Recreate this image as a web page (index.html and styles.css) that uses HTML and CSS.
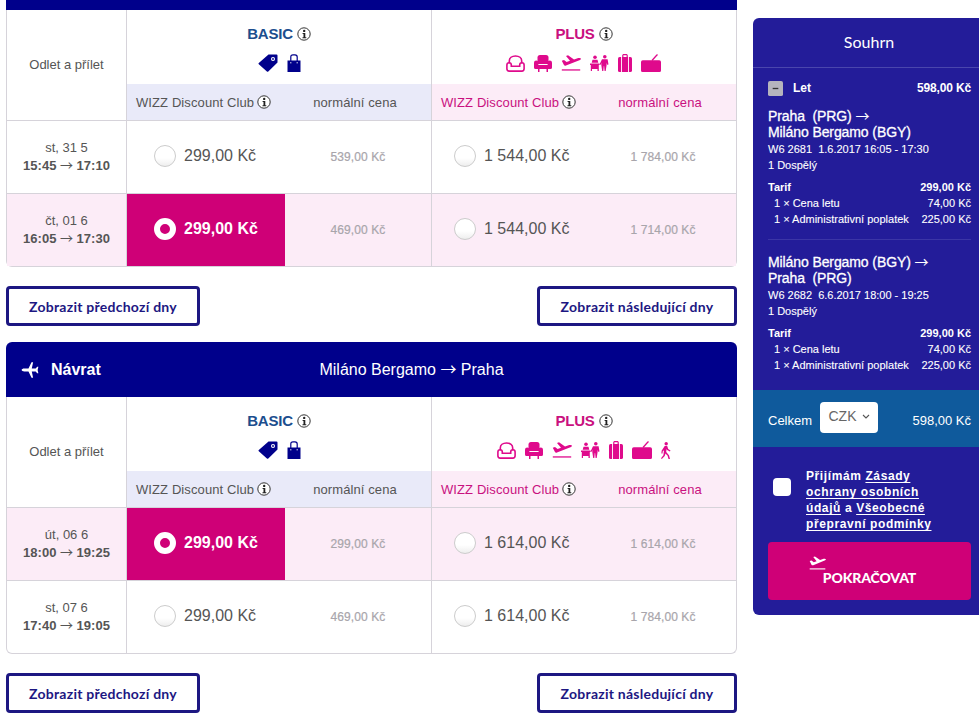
FILE: index.html
```html
<!DOCTYPE html>
<html lang="cs">
<head>
<meta charset="utf-8">
<title>Výběr letu</title>
<link rel="stylesheet" href="styles.css">
</head>
<body>
<svg class="defs" width="0" height="0" aria-hidden="true">
  <symbol id="i-info" viewBox="0 0 14 14"><circle cx="7" cy="7" r="6.2" fill="#fff" stroke="#333" stroke-width="1"/><circle cx="7.2" cy="3.9" r="1.2" fill="#222"/><path d="M5.6 6h2.7v4.2h1v1H5.500v-1h1V7H5.600z" fill="#222"/></symbol>
  <symbol id="i-tag" viewBox="0 0 20 18"><path d="M10.500.5h8a1 1 0 0 1 1 1v7L10.300 17.500a1 1 0 0 1-1.400 0L.8 10.300a1 1 0 0 1 0-1.400z" fill="currentColor"/><circle cx="15" cy="5" r="2" fill="#fff"/><circle cx="15" cy="5" r=".9" fill="currentColor"/></symbol>
  <symbol id="i-bag" viewBox="0 0 14 18"><path d="M.5 6.500h13V18H.5z" fill="currentColor"/><path d="M3.800 9V3A2.200 2.200 0 0 1 6 .8h2A2.200 2.200 0 0 1 10.200 3v6" fill="none" stroke="currentColor" stroke-width="1.200"/><path d="M3.200 8.800h1.200M9.600 8.800h1.200" stroke="#fff" stroke-width="1"/></symbol>
  <symbol id="i-seat-o" viewBox="0 0 19 17"><path d="M3.300 8.500V6C3.300 3 5.800 1 9.500 1s6.200 2 6.200 5v2.500" fill="none" stroke="currentColor" stroke-width="1.600"/><path d="M.9 10a2.200 2.200 0 0 1 4.400 0v1.200h8.400V10a2.200 2.200 0 0 1 4.400 0v3.800a2.300 2.300 0 0 1-2.300 2.300H3.200A2.300 2.300 0 0 1 .9 13.800z" fill="none" stroke="currentColor" stroke-width="1.600"/></symbol>
  <symbol id="i-seat" viewBox="0 0 18 17"><path d="M3.500 2.500A2.500 2.500 0 0 1 6 0h6a2.500 2.500 0 0 1 2.500 2.500V9h-11z" fill="currentColor"/><path d="M0 7.800a2.200 2.200 0 0 1 4.400 0V10h9.200V7.800a2.200 2.200 0 0 1 4.400 0v4.700a1.500 1.500 0 0 1-1.500 1.500h-15A1.500 1.500 0 0 1 0 12.500z" fill="currentColor"/><path d="M4 13.500h1.500V17H4zM12.500 13.500H14V17h-1.500z" fill="currentColor"/></symbol>
  <symbol id="i-plane" viewBox="0 0 20 16"><path d="M.8 5.700 3 5l2.600 2L9 5.800 5 .9l2-.6 6 4.300 4.300-1.500c1.200-.4 2.300-.2 2.600.4.200.6-.4 1.200-1.500 1.700L5 10.600c-.8.300-1.400.2-1.900-.3z" fill="currentColor"/><path d="M.8 14.300h18.400v1.300H.8z" fill="currentColor"/></symbol>
  <symbol id="i-people" viewBox="0 0 19 16"><circle cx="5" cy="2.200" r="1.800" fill="currentColor"/><circle cx="14.800" cy="1.800" r="1.800" fill="currentColor"/><path d="M2.500 4.800h5l.8 3H1.700zM0 8.600h9.600V10H8.800v6H7.500v-2H2v2H.8v-6H0z" fill="currentColor"/><path d="M12 4.200h5.600l.9 5.300-1.400.2-.5-2.300V10l-.9 6h-1.100l-.5-5h-.3l-.5 5h-1.100l-.9-6V7.400l-.5 2.300-1.300-.2z" fill="currentColor"/></symbol>
  <symbol id="i-case" viewBox="0 0 14 18"><path d="M4.200 3.200V1.600C4.200.7 4.900 0 5.800 0h2.400c.9 0 1.600.7 1.600 1.600v1.600H8.600V1.200H5.400v2z" fill="currentColor"/><rect y="3" width="14" height="15" rx="1.600" fill="currentColor"/><path d="M3.500 3v15M10.500 3v15" stroke="#fff" stroke-width=".9"/></symbol>
  <symbol id="i-hand" viewBox="0 0 20 18"><path d="M11 6.500 15 2l1.500-1.500" fill="none" stroke="currentColor" stroke-width="1.300"/><path d="M0 8a1.800 1.800 0 0 1 1.800-1.800h16.400A1.800 1.800 0 0 1 20 8v8.500a1.500 1.500 0 0 1-1.500 1.500h-17A1.500 1.500 0 0 1 0 16.500z" fill="currentColor"/></symbol>
  <symbol id="i-walk" viewBox="0 0 10 17"><circle cx="5.200" cy="1.700" r="1.700" fill="currentColor"/><path d="M3.700 4h2.500l1 3 2.300 1.500-.6.900L6.100 8l-.5-1-.4 3 2.800 3.200 1 3.800H7.500l-.9-3.200L4.500 11.500 3.700 14 .8 17l-.8-.8L2.400 13.300l.6-5-1.300 1.100-.2 2H.4l.2-2.700z" fill="currentColor"/></symbol>
  <symbol id="i-back" viewBox="0 0 20 18"><g transform="translate(20 0) scale(-1 1)"><path d="M19.400 9c0-.9-1.400-1.600-3-1.600h-4.700L8.300.4H6.500l1.500 7H3.600L1.900 5.300H.6L1.400 9 .6 12.700h1.300l1.700-2.100H8l-1.500 7h1.800l3.400-7h4.700c1.600 0 3-.7 3-1.600z" fill="currentColor"/></g></symbol>
  <symbol id="i-minus" viewBox="0 0 16 16"><rect width="16" height="16" rx="2" fill="#b5b4bd"/><path d="M5 8h6" stroke="#333" stroke-width="1.400"/></symbol>
</svg>

<div class="page">
  <main class="main">
    <section class="flight flight-out">
      <div class="bar bar-cut"></div>
      <div class="fare-table">
        <div class="head">
          <div class="head-label">Odlet a přílet</div>
          <div class="plan">
            <div class="plan-top plan-basic">
              <div class="plan-name">BASIC <svg class="info"><use href="#i-info"/></svg></div>
              <div class="plan-icons">
                <svg class="ic-tag"><use href="#i-tag"/></svg>
                <svg class="ic-bag"><use href="#i-bag"/></svg>
              </div>
            </div>
            <div class="plan-sub sub-basic">
              <div class="sub-club">WIZZ Discount Club <svg class="info"><use href="#i-info"/></svg></div>
              <div class="sub-norm">normální cena</div>
            </div>
          </div>
          <div class="plan plan-last">
            <div class="plan-top plan-plus">
              <div class="plan-name">PLUS <svg class="info"><use href="#i-info"/></svg></div>
              <div class="plan-icons icons-plus">
                <svg class="ic-seat"><use href="#i-seat-o"/></svg>
                <svg class="ic-seat2"><use href="#i-seat"/></svg>
                <svg class="ic-plane"><use href="#i-plane"/></svg>
                <svg class="ic-people"><use href="#i-people"/></svg>
                <svg class="ic-case"><use href="#i-case"/></svg>
                <svg class="ic-hand"><use href="#i-hand"/></svg>
              </div>
            </div>
            <div class="plan-sub sub-plus">
              <div class="sub-club">WIZZ Discount Club <svg class="info"><use href="#i-info"/></svg></div>
              <div class="sub-norm">normální cena</div>
            </div>
          </div>
        </div>
        <div class="row">
          <div class="when"><div>st, 31 5</div><b>15:45 <span class="arr">→</span> 17:10</b></div>
          <div class="fare"><div class="club"><span class="radio"></span><span class="price">299,00 Kč</span></div><div class="norm">539,00 Kč</div></div>
          <div class="fare fare-last"><div class="club"><span class="radio"></span><span class="price">1 544,00 Kč</span></div><div class="norm">1 784,00 Kč</div></div>
        </div>
        <div class="row row-on row-end">
          <div class="when"><div>čt, 01 6</div><b>16:05 <span class="arr">→</span> 17:30</b></div>
          <div class="fare"><div class="club club-on"><span class="radio radio-on"></span><span class="price">299,00 Kč</span></div><div class="norm">469,00 Kč</div></div>
          <div class="fare fare-last"><div class="club"><span class="radio"></span><span class="price">1 544,00 Kč</span></div><div class="norm">1 714,00 Kč</div></div>
        </div>
      </div>
      <div class="more">
        <a class="btn btn-prev">Zobrazit předchozí dny</a>
        <a class="btn btn-next">Zobrazit následující dny</a>
      </div>
    </section>

    <section class="flight">
      <div class="bar">
        <div class="bar-title"><svg class="ic-back"><use href="#i-back"/></svg>Návrat</div>
        <div class="bar-route">Miláno Bergamo <span class="arr">→</span> Praha</div>
      </div>
      <div class="fare-table">
        <div class="head">
          <div class="head-label">Odlet a přílet</div>
          <div class="plan">
            <div class="plan-top plan-basic">
              <div class="plan-name">BASIC <svg class="info"><use href="#i-info"/></svg></div>
              <div class="plan-icons">
                <svg class="ic-tag"><use href="#i-tag"/></svg>
                <svg class="ic-bag"><use href="#i-bag"/></svg>
              </div>
            </div>
            <div class="plan-sub sub-basic">
              <div class="sub-club">WIZZ Discount Club <svg class="info"><use href="#i-info"/></svg></div>
              <div class="sub-norm">normální cena</div>
            </div>
          </div>
          <div class="plan plan-last">
            <div class="plan-top plan-plus">
              <div class="plan-name">PLUS <svg class="info"><use href="#i-info"/></svg></div>
              <div class="plan-icons icons-plus">
                <svg class="ic-seat"><use href="#i-seat-o"/></svg>
                <svg class="ic-seat2"><use href="#i-seat"/></svg>
                <svg class="ic-plane"><use href="#i-plane"/></svg>
                <svg class="ic-people"><use href="#i-people"/></svg>
                <svg class="ic-case"><use href="#i-case"/></svg>
                <svg class="ic-hand"><use href="#i-hand"/></svg>
                <svg class="ic-walk"><use href="#i-walk"/></svg>
              </div>
            </div>
            <div class="plan-sub sub-plus">
              <div class="sub-club">WIZZ Discount Club <svg class="info"><use href="#i-info"/></svg></div>
              <div class="sub-norm">normální cena</div>
            </div>
          </div>
        </div>
        <div class="row row-on">
          <div class="when"><div>út, 06 6</div><b>18:00 <span class="arr">→</span> 19:25</b></div>
          <div class="fare"><div class="club club-on"><span class="radio radio-on"></span><span class="price">299,00 Kč</span></div><div class="norm">299,00 Kč</div></div>
          <div class="fare fare-last"><div class="club"><span class="radio"></span><span class="price">1 614,00 Kč</span></div><div class="norm">1 614,00 Kč</div></div>
        </div>
        <div class="row row-end">
          <div class="when"><div>st, 07 6</div><b>17:40 <span class="arr">→</span> 19:05</b></div>
          <div class="fare"><div class="club"><span class="radio"></span><span class="price">299,00 Kč</span></div><div class="norm">469,00 Kč</div></div>
          <div class="fare fare-last"><div class="club"><span class="radio"></span><span class="price">1 614,00 Kč</span></div><div class="norm">1 784,00 Kč</div></div>
        </div>
      </div>
      <div class="more">
        <a class="btn btn-prev">Zobrazit předchozí dny</a>
        <a class="btn btn-next">Zobrazit následující dny</a>
      </div>
    </section>
  </main>

  <aside class="side">
    <h2 class="side-title">Souhrn</h2>
    <div class="side-body">
      <div class="let"><svg class="ic-minus"><use href="#i-minus"/></svg><span class="let-name">Let</span><span class="let-sum">598,00 Kč</span></div>
      <div class="leg">
        <div class="route">Praha&nbsp; (PRG) <span class="arr">→</span><br>Miláno Bergamo (BGY)</div>
        <div class="meta">W6 2681&nbsp; 1.6.2017 16:05 - 17:30</div>
        <div class="meta">1 Dospělý</div>
        <div class="lines">
          <div class="line line-b"><span>Tarif</span><span>299,00 Kč</span></div>
          <div class="line line-i"><span>1 × Cena letu</span><span>74,00 Kč</span></div>
          <div class="line line-i"><span>1 × Administrativní poplatek</span><span>225,00 Kč</span></div>
        </div>
      </div>
      <div class="leg leg-2">
        <div class="route">Miláno Bergamo (BGY) <span class="arr">→</span><br>Praha&nbsp; (PRG)</div>
        <div class="meta">W6 2682&nbsp; 6.6.2017 18:00 - 19:25</div>
        <div class="meta">1 Dospělý</div>
        <div class="lines">
          <div class="line line-b"><span>Tarif</span><span>299,00 Kč</span></div>
          <div class="line line-i"><span>1 × Cena letu</span><span>74,00 Kč</span></div>
          <div class="line line-i"><span>1 × Administrativní poplatek</span><span>225,00 Kč</span></div>
        </div>
      </div>
    </div>
    <div class="total">
      <span class="total-label">Celkem</span>
      <span class="cur">CZK <svg class="chev" viewBox="0 0 8 5"><path d="M1 1l3 3 3-3" fill="none" stroke="#555" stroke-width="1.100"/></svg></span>
      <span class="total-sum">598,00 Kč</span>
    </div>
    <div class="terms">
      <span class="check"></span>
      <p class="terms-text">Přijímám <a>Zásady</a> <a>ochrany osobních</a> <a>údajů</a> a <a>Všeobecné</a> <a>přepravní podmínky</a></p>
    </div>
    <div class="go">
      <svg class="ic-go"><use href="#i-plane"/></svg>
      <span class="go-text">POKRAČOVAT</span>
    </div>
  </aside>
</div>
</body>
</html>
```
FILE: styles.css
```css
* { box-sizing: border-box; }
html, body { margin: 0; padding: 0; height: 722px; overflow: hidden; background: #fff; }
body { font-family: "Liberation Sans", Arial, sans-serif; color: #555; }
.defs { position: absolute; }
.page { display: flex; align-items: flex-start; gap: 16px; padding-left: 6px; }
.main { width: 731px; flex: none; }
.arr { font-family: "Noto Sans CJK SC", sans-serif; line-height: 0; font-weight: normal; -webkit-text-stroke: 0; }

.flight-out { margin-bottom: 16px; }
.bar { height: 55px; background: #00008b; color: #fff; border-radius: 6px 6px 0 0; display: flex; align-items: center; position: relative; }
.bar-cut { height: 10px; border-radius: 0; }
.bar-title { display: flex; align-items: center; font-size: 16px; font-weight: bold; padding-left: 15px; gap: 12px; }
.ic-back { width: 18px; height: 16px; }
.bar-route { position: absolute; left: 80px; right: 0; text-align: center; font-size: 16px; }

.fare-table { border: 1px solid #d6d3da; border-top: 0; border-radius: 0 0 6px 6px; }
.head { display: grid; grid-template-columns: 120px 305px 304px; height: 111px; border-bottom: 1px solid #d6d3da; }
.head-label { border-right: 1px solid #d6d3da; display: flex; align-items: center; justify-content: center; font-size: 13px; padding-bottom: 1px; }
.plan { display: flex; flex-direction: column; border-right: 1px solid #d6d3da; }
.plan-last { border-right: 0; }
.plan-top { height: 74px; display: flex; flex-direction: column; align-items: center; padding-top: 15px; }
.plan-name { font-size: 15px; font-weight: bold; line-height: 18px; display: flex; align-items: center; gap: 4px; letter-spacing: -.2px; }
.plan-basic { color: #1c4e8e; }
.plan-plus { color: #c9117f; }
.plan-icons { display: flex; align-items: center; gap: 9px; margin-top: 10px; height: 20px; color: #00008b; }
.icons-plus { color: #df0a8c; margin-left: -1px; }
.info { width: 14px; height: 14px; color: #222; }
.ic-tag { width: 20px; height: 18px; }
.ic-bag { width: 14px; height: 18px; }
.ic-seat { width: 19px; height: 17px; }
.ic-seat2 { width: 18px; height: 17px; }
.ic-plane { width: 20px; height: 16px; }
.ic-people { width: 19px; height: 16px; }
.ic-case { width: 14px; height: 18px; }
.ic-hand { width: 20px; height: 18px; }
.ic-walk { width: 10px; height: 17px; }
.plan-sub { height: 36px; display: grid; grid-template-columns: 158px 1fr; align-items: center; font-size: 13px; letter-spacing: .1px; }
.sub-basic { background: #e9eaf9; }
.sub-plus { background: #fcecf7; color: #c9117f; }
.sub-club { display: flex; align-items: center; gap: 3px; padding-left: 9px; white-space: nowrap; }
.sub-norm { text-align: center; padding-right: 6px; }

.row { display: grid; grid-template-columns: 120px 305px 304px; height: 73px; border-bottom: 1px solid #d6d3da; }
.row-end { border-bottom: 0; height: 72px; }
.row-on { background: #fcecf7; }
.when { border-right: 1px solid #d6d3da; display: flex; flex-direction: column; align-items: center; justify-content: center; font-size: 13px; line-height: 18px; }
.fare { display: grid; grid-template-columns: 158px 1fr; border-right: 1px solid #d6d3da; }
.fare-last { border-right: 0; }
.club { display: flex; align-items: center; padding-left: 27px; gap: 8px; font-size: 16px; padding-bottom: 2px; }
.fare-last .club { padding-left: 22px; }
.club-on { background: #cf0077; color: #fff; font-weight: bold; }
.radio { width: 22px; height: 22px; flex: none; border-radius: 50%; border: 1px solid #ccc; background: linear-gradient(#fff 60%, #eee); }
.radio-on { border: 6.5px solid #fff; background: #cf0077; }
.norm { display: flex; align-items: center; justify-content: center; font-size: 12px; color: #a8a5ab; -webkit-text-stroke: .2px #a8a5ab; letter-spacing: .1px; }

.more { display: flex; justify-content: space-between; padding-top: 19px; }
.btn { height: 40px; border: 3px solid #1d1782; border-radius: 4px; display: flex; align-items: center; justify-content: center; font-family: Lato, sans-serif; font-weight: bold; font-size: 14px; color: #1d1782; letter-spacing: .25px; }
.btn-prev { width: 194px; }
.btn-next { width: 200px; }

.side { width: 226px; flex: none; margin-top: 18px; background: #231c99; color: #fff; border-radius: 6px 0 0 6px; height: 597px; font-size: 11px; }
.side-title { margin: 0; height: 50px; padding: 0 0 2px 6px; display: flex; align-items: center; justify-content: center; font-family: Lato, sans-serif; font-weight: normal; font-size: 16px; border-bottom: 1px solid #4a46ad; }
.side-body { padding: 12px 8px 0 15px; height: 322px; }
.let { display: flex; align-items: center; font-weight: bold; font-size: 12px; height: 16px; }
.ic-minus { width: 15px; height: 15px; flex: none; }
.let-name { margin-left: 10px; }
.let-sum { margin-left: auto; letter-spacing: -.15px; }
.leg { padding-top: 12px; padding-bottom: 12px; border-bottom: 1px solid #3b35a6; height: 144px; }
.leg-2 { border-bottom: 0; padding-top: 14px; }
.route { font-size: 14px; line-height: 16px; letter-spacing: -.1px; -webkit-text-stroke: .3px #fff; }
.meta { line-height: 16px; font-size: 11px; -webkit-text-stroke: .1px #fff; }
.route + .meta { margin-top: 1px; }
.lines { margin-top: 6px; }
.line { display: flex; justify-content: space-between; line-height: 16px; }
.line-b { font-weight: bold; }
.line-i { padding-left: 6px; -webkit-text-stroke: .1px #fff; }
.total { height: 57px; background: #0f5a9c; display: flex; align-items: center; padding: 0 8px 0 15px; font-size: 13px; }
.total-label { width: 52px; flex: none; padding-top: 3px; }
.cur { width: 58px; height: 31px; background: #fff; color: #666; border-radius: 4px; margin-bottom: 2px; display: flex; align-items: center; justify-content: center; gap: 5px; font-size: 14px; padding-bottom: 3px; }
.chev { width: 8px; height: 5px; }
.total-sum { margin-left: auto; padding-top: 3px; }
.terms { display: flex; align-items: flex-start; padding: 21px 0 0 20px; gap: 15px; }
.check { width: 18px; height: 18px; margin-top: 10px; background: #fff; border-radius: 4px; flex: none; }
.terms-text { margin: 0; width: 135px; font-size: 12px; font-weight: bold; line-height: 16px; letter-spacing: .6px; }
.terms-text a { text-decoration: underline; text-underline-offset: 2px; }
.go { margin: 10px 8px 0 15px; height: 58px; background: #cf0077; border-radius: 4px; position: relative; display: flex; align-items: flex-end; justify-content: center; padding-bottom: 14px; }
.ic-go { position: absolute; left: 41px; top: 14px; width: 17px; height: 14px; color: #fff; }
.go-text { font-family: Lato, sans-serif; font-weight: 900; font-size: 14px; letter-spacing: -.15px; line-height: 16px; }
```
